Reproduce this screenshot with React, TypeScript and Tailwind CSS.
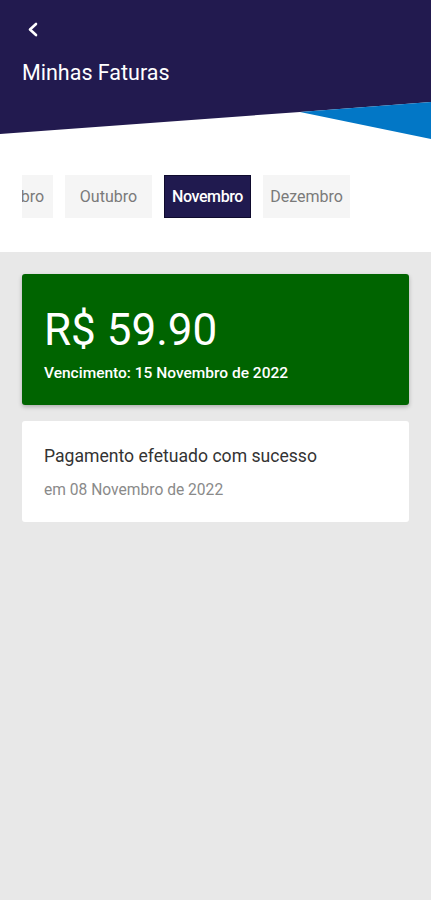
import { useState } from 'react';

const months = ['Setembro', 'Outubro', 'Novembro', 'Dezembro'];

export default function App() {
  const [selected, setSelected] = useState('Novembro');

  return (
    <div className="min-h-screen bg-[#e8e8e8] font-['Roboto',sans-serif]">
      {/* header + month tabs */}
      <div className="relative bg-white h-[252px]">
        <svg className="absolute top-0 left-0" width="431" height="140" viewBox="0 0 431 140">
          <polygon points="0,0 431,0 431,102 300,112 0,134" fill="#221a4f" />
          <polygon points="300,112 431,102 431,139" fill="#0277c6" />
        </svg>

        <div className="relative pt-[18px]">
          <button className="ml-[22px] h-[24px] w-[24px] flex items-center text-white">
            <svg width="24" height="24" viewBox="0 0 24 24">
              <path d="M14 6 L8 11.5 L14 17" fill="none" stroke="currentColor" strokeWidth="2.6" strokeLinecap="round" strokeLinejoin="round" />
            </svg>
          </button>
          <h1 className="ml-[22px] mt-[17px] text-white text-[21.5px] leading-[28px]">Minhas Faturas</h1>

          <div className="ml-[22px] mt-[88px] overflow-hidden">
            <div className="flex gap-[12px] -ml-[56px] w-max">
              {months.map((m) => (
                <button
                  key={m}
                  onClick={() => setSelected(m)}
                  className={
                    m === selected
                      ? 'w-[87px] h-[43px] flex items-center justify-center bg-[#201a4f] border border-[#0f0b2e] text-white font-medium text-[16px] tracking-[-0.4px]'
                      : 'w-[87px] h-[43px] flex items-center justify-center bg-[#f5f5f5] text-[#7a7a7a] text-[16px]'
                  }
                >
                  {m}
                </button>
              ))}
            </div>
          </div>
        </div>
      </div>

      {/* invoice */}
      <div className="px-[22px] pt-[22px] flex flex-col gap-[16px]">
        <div className="bg-[#006400] rounded-[3px] shadow-[0_2px_4px_rgba(0,0,0,0.25)] px-[22px] pt-[30px] pb-[22px] text-white">
          <div className="text-[44px] leading-[52px]">R$ 59.90</div>
          <div className="mt-[7px] text-[15.5px] leading-[20px] font-medium">Vencimento: 15 Novembro de 2022</div>
        </div>

        <div className="bg-white rounded-[3px] px-[22px] pt-[24px] pb-[22px]">
          <div className="text-[17.6px] leading-[22px] text-[#333333]">Pagamento efetuado com sucesso</div>
          <div className="mt-[13px] text-[15.6px] leading-[20px] text-[#8a8a8a]">em 08 Novembro de 2022</div>
        </div>
      </div>
    </div>
  );
}
